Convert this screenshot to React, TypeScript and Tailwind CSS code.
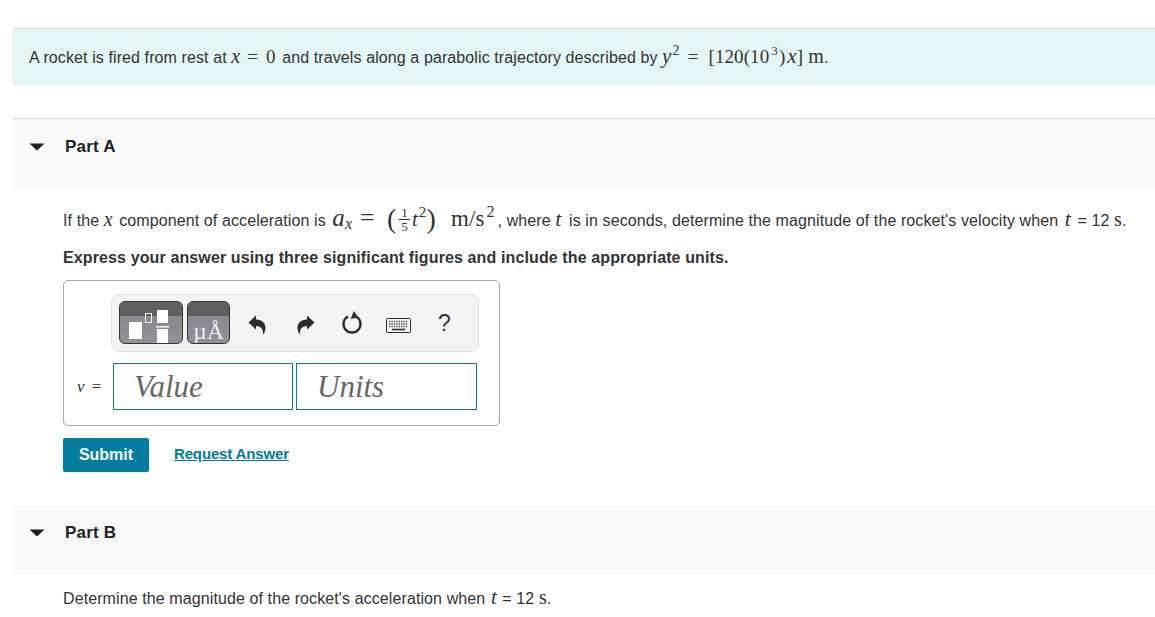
const serif = "font-['Liberation_Serif',serif]"

function Frac() {
  return (
    <span className="inline-flex flex-col items-center align-middle text-[13px] leading-[12px] relative top-[-1px]">
      <span className="border-b border-[#333] px-[2px] leading-[12px]">1</span>
      <span className="leading-[13px]">5</span>
    </span>
  )
}

function PartHeader({ title, bordered }: { title: string; bordered?: boolean }) {
  return (
    <div className={`ml-[13px] h-[70px] bg-[#f9f9f9] flex items-start pt-[16px] ${bordered ? "border-t border-[#dddddd] h-[71px]" : ""}`}>
      <svg width="16" height="8" viewBox="0 0 16 8" className="ml-[16px] mt-[8px]">
        <path d="M0.5 0.5 H15.5 L8 7.5 Z" fill="#1f1f1f" />
      </svg>
      <span className="ml-[20px] text-[17px] leading-[24px] font-bold text-[#222] tracking-[0.2px]">{title}</span>
    </div>
  )
}

function TemplateButton({ width, children }: { width: string; children: React.ReactNode }) {
  return (
    <div className={`${width} h-[43px] rounded-[6px] border border-[#333] overflow-hidden flex flex-col bg-gradient-to-b from-[#85848c] to-[#92919a] relative`}>
      <div className="h-[14px] bg-[#5f5f5f] shrink-0" />
      {children}
    </div>
  )
}

function Undo({ flip }: { flip?: boolean }) {
  return (
    <svg width="18" height="20" viewBox="0 0 18 20" className={`mt-[5px] ${flip ? "-scale-x-100" : ""}`}>
      <path d="M0.5 7.5 L8 0.5 V4.5 C14 4.5 17.5 8 17.5 13 C17.5 15.5 16.5 18 15 19.5 C15.5 15 13.5 11 8 11 V14.5 Z" fill="#2b2b2b" />
    </svg>
  )
}

export default function App() {
  return (
    <div className="w-[1155px] h-[617px] overflow-hidden bg-white text-[#333] text-[16px] tracking-[0.1px] font-['Liberation_Sans',Arial,sans-serif]">
      <div className="pt-[28px]">
        <div className="ml-[13px] h-[57px] border-t border-[#dddddd] bg-[#e5f6f6] flex items-center pl-[16px] whitespace-nowrap">
          <span>
            A rocket is fired from rest at{" "}
            <span className={`${serif} italic text-[20px]`}>x</span>
            <span className={`${serif} text-[19px] ml-[7px]`}>=</span>
            <span className={`${serif} text-[19px] ml-[8px] mr-[2px]`}>0</span> and travels along a parabolic trajectory described by{" "}
            <span className={`${serif} text-[19px]`}>
              <i className="text-[21px]">y</i>
              <sup className="text-[14px] -top-[8px] ml-[1px]">2</sup>
              <span className="ml-[8px]">=</span>
              <span className="ml-[10px] tracking-[0.1px]">[120(10</span>
              <sup className="text-[13px] -top-[8px] ml-[2px]">3</sup>
              <span className="ml-[1px]">)</span>
              <i className="text-[21px] ml-[2px]">x</i>]<span className="ml-[5px] text-[20px]">m</span>
            </span>
            .
          </span>
        </div>
      </div>

      <div className="mt-[33px]">
        <PartHeader title="Part A" bordered />
      </div>

      <div className="pl-[63px]">
        <div className="mt-[16px] h-[28px] flex items-center whitespace-nowrap">
          <span>
            If the <span className={`${serif} italic text-[20px] mr-[2px]`}>x</span> component of acceleration is{" "}
            <span className={`${serif} text-[21px]`}>
              <i className="text-[25px] ml-[2px]">a</i>
              <sub className="italic text-[16px] -bottom-[3px]">x</sub>
              <span className="text-[26px] ml-[8px]">=</span>
              <span className="text-[28px] font-light align-[-2px] ml-[12px]">(</span>
              <span className="ml-[3px]"><Frac /></span>
              <i className="ml-[2px]">t</i>
              <sup className="text-[15px] -top-[9px] ml-[1px]">2</sup>
              <span className="text-[28px] font-light align-[-2px]">)</span>
              <span className="ml-[15px] text-[23px]">m/s</span>
              <sup className="text-[16px] -top-[9px] ml-[2px] mr-[3px]">2</sup>
            </span>
            , where <span className={`${serif} italic text-[22px] mr-[3px]`}>t</span> is in seconds, determine the magnitude of the rocket's velocity when{" "}
            <span className={`${serif} italic text-[22px] mx-[2px]`}>t</span> = 12 <span className={`${serif} text-[20px]`}>s</span>.
          </span>
        </div>

        <p className="mt-[15px] h-[20px] leading-[20px] font-bold text-[#333] tracking-[0.12px]">
          Express your answer using three significant figures and include the appropriate units.
        </p>

        <div className="mt-[12px] w-[437px] h-[146px] border border-[#aaaaaa] rounded-[5px] pt-[13px] pl-[13px]">
          <div className="ml-[34px] w-[368px] h-[58px] bg-[#f3f3f3] border border-[#e2e2e2] rounded-[8px] flex items-center pl-[7px] pb-[2px]">
            <TemplateButton width="w-[64px]">
              <svg width="62" height="41" viewBox="0 0 62 41" className="absolute left-0 top-0">
                <rect x="9" y="20" width="13" height="17" fill="#fff" />
                <rect x="25.5" y="11.5" width="6" height="9" fill="none" stroke="#fff" strokeWidth="1" />
                <rect x="37" y="8" width="11" height="13" fill="#fff" />
                <rect x="36" y="24" width="13" height="1.5" fill="#fff" />
                <rect x="37" y="27" width="11" height="14" fill="#fff" />
              </svg>
            </TemplateButton>
            <div className="ml-[4px]">
              <TemplateButton width="w-[43px]">
                <span className={`${serif} text-[#eeeeee] text-[24px] leading-[24px] text-center whitespace-nowrap mt-[3px] tracking-normal`}>µÅ</span>
              </TemplateButton>
            </div>
            <div className="ml-[18px] flex items-center">
              <Undo />
            </div>
            <div className="ml-[31px] flex items-center">
              <Undo flip />
            </div>
            <svg width="22" height="26" viewBox="0 0 22 26" className="ml-[26px] mt-[2px]">
              <path d="M7 6.5 A8.5 8.5 0 1 0 15 6.5" fill="none" stroke="#2b2b2b" strokeWidth="2.4" />
              <path d="M13 1 L17 7.5 L9.5 9 Z" fill="#2b2b2b" />
            </svg>
            <svg width="25" height="15" viewBox="0 0 25 15" className="ml-[23px] mt-[7px]">
              <rect x="0.5" y="0.5" width="24" height="14" rx="1" fill="#f3f3f3" stroke="#2b2b2b" />
              <path d="M3 3.5 H22 M3 6 H22 M3 8.5 H22" stroke="#555" strokeWidth="1.3" strokeDasharray="1.4 1" />
              <path d="M6 11.5 H19" stroke="#2b2b2b" strokeWidth="1.6" />
            </svg>
            <span className="ml-[27px] text-[23px] leading-none text-[#333] mt-[2px] tracking-normal">?</span>
          </div>

          <div className="mt-[11px] flex items-center">
            <span className={`${serif} w-[36px] text-[17px] text-[#333] whitespace-nowrap`}>
              <i>v</i>
              <span className="ml-[7px]">=</span>
            </span>
            <div className={`${serif} w-[180px] h-[47px] border border-[#007c9e] pl-[20px] pt-[1px] text-[31px] italic text-[#666] leading-[44px] tracking-normal`}>Value</div>
            <div className={`${serif} ml-[3px] w-[181px] h-[47px] border border-[#007c9e] pl-[20px] pt-[1px] text-[31px] italic text-[#666] leading-[44px] tracking-normal`}>Units</div>
          </div>
        </div>

        <div className="mt-[12px] flex items-center">
          <button className="w-[86px] h-[34px] bg-[#007c9e] rounded-[2px] text-white font-bold text-[16px] tracking-[0px]">Submit</button>
          <a className="ml-[25px] text-[#007c9e] font-bold text-[15px] underline tracking-[-0.15px] -mt-[1px]">Request Answer</a>
        </div>
      </div>

      <div className="mt-[33px]">
        <PartHeader title="Part B" />
      </div>

      <p className="pl-[63px] mt-[10px] leading-[24px]">
        Determine the magnitude of the rocket's acceleration when <span className={`${serif} italic text-[21px] mx-[1px]`}>t</span> = 12 <span className={`${serif} text-[20px]`}>s</span>.
      </p>
    </div>
  )
}
